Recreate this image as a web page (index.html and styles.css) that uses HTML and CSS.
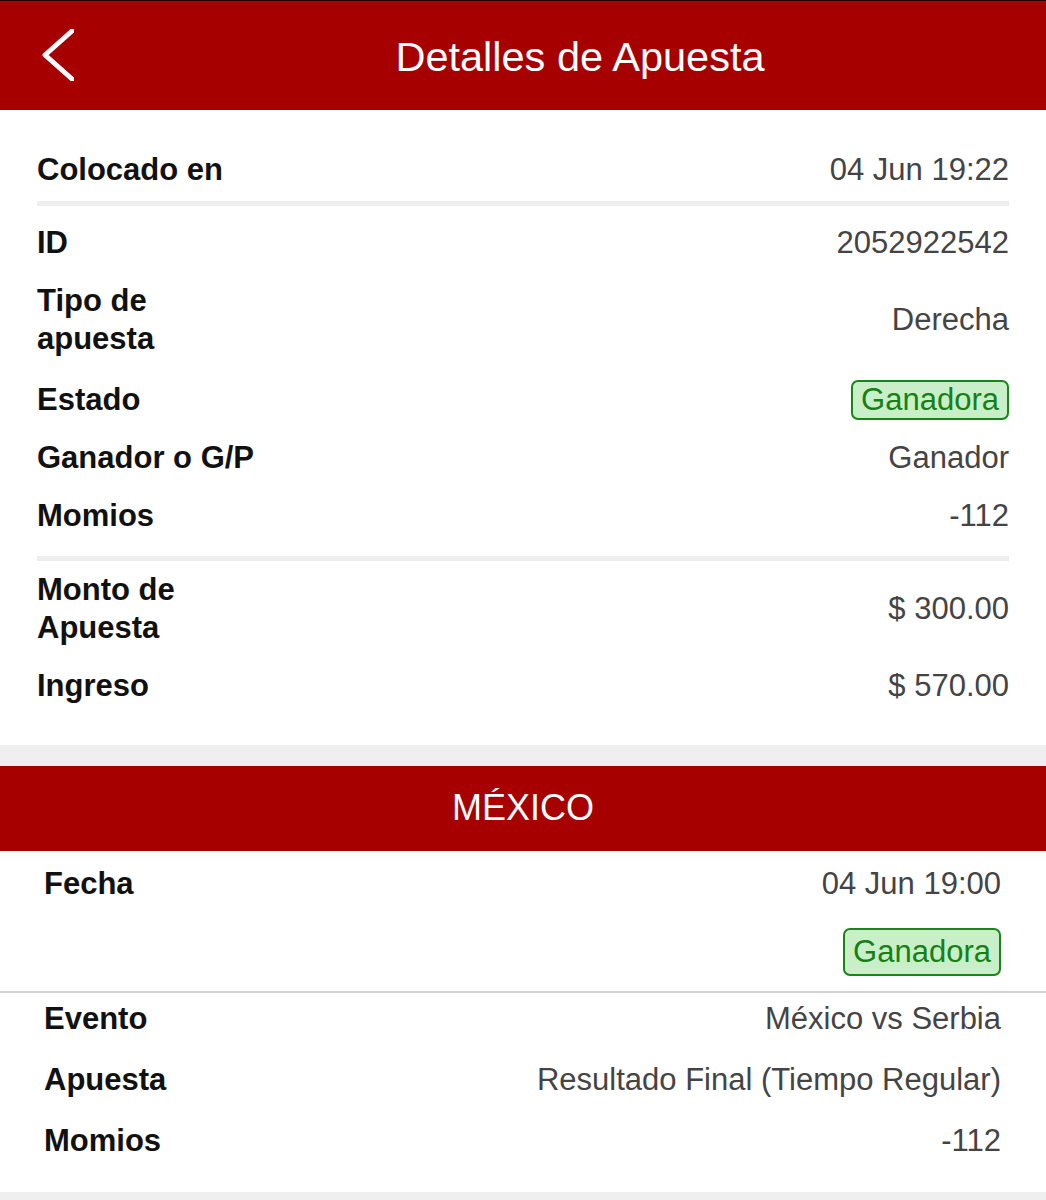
FILE: index.html
```html
<!DOCTYPE html>
<html lang="es">
<head>
    <meta charset="UTF-8">
    <title>Detalles de Apuesta</title>
    <link rel="stylesheet" href="styles.css">
</head>
<body>
    <div class="header">
        <a class="back" href="#">
            <svg width="32" height="52" viewBox="0 0 32 52">
                <polyline points="30,2 3,26 30,50" fill="none" stroke="#fff" stroke-width="5" stroke-linecap="round" stroke-linejoin="round"/>
            </svg>
        </a>
        <h1 class="title">Detalles de Apuesta</h1>
    </div>

    <!-- resumen de la apuesta -->
    <div class="summary">
        <div class="row">
            <span class="label">Colocado en</span>
            <span class="value">04 Jun 19:22</span>
        </div>
        <div class="line"></div>
        <div class="row">
            <span class="label">ID</span>
            <span class="value">2052922542</span>
        </div>
        <div class="row">
            <span class="label">Tipo de<br>apuesta</span>
            <span class="value">Derecha</span>
        </div>
        <div class="row badge-row">
            <span class="label">Estado</span>
            <span class="badge">Ganadora</span>
        </div>
        <div class="row">
            <span class="label">Ganador o G/P</span>
            <span class="value">Ganador</span>
        </div>
        <div class="row">
            <span class="label">Momios</span>
            <span class="value">-112</span>
        </div>
        <div class="line line-low"></div>
        <div class="row">
            <span class="label">Monto de<br>Apuesta</span>
            <span class="value">$ 300.00</span>
        </div>
        <div class="row">
            <span class="label">Ingreso</span>
            <span class="value">$ 570.00</span>
        </div>
    </div>

    <div class="gap"></div>

    <!-- seleccion -->
    <div class="band">MÉXICO</div>
    <div class="leg">
        <div class="leg-top">
            <div class="row fecha">
                <span class="label">Fecha</span>
                <span class="value">04 Jun 19:00</span>
            </div>
            <div class="status">
                <span class="badge badge-big">Ganadora</span>
            </div>
        </div>
        <div class="leg-info">
            <div class="row">
                <span class="label">Evento</span>
                <span class="value">México vs Serbia</span>
            </div>
            <div class="row">
                <span class="label">Apuesta</span>
                <span class="value">Resultado Final (Tiempo Regular)</span>
            </div>
            <div class="row">
                <span class="label">Momios</span>
                <span class="value">-112</span>
            </div>
        </div>
    </div>
    <div class="bottom"></div>
</body>
</html>
```

FILE: styles.css
```css
*{
    padding: 0;
    margin: 0;
    box-sizing: border-box;
}
body{
    font-family: "Liberation Sans", Arial, sans-serif;
    background-color: #efefef;
    color: #111;
}
.header{
    height: 110px;
    border-top: 1px solid #2a0000;
    background-color: #a60000;
    display: flex;
    align-items: center;
}
.header .back{
    width: 114px;
    height: 100%;
    padding-left: 42px;
    display: flex;
    align-items: center;
}
.header .back svg{
    display: block;
    margin-top: -1px;
}
.header .title{
    flex: 1;
    text-align: center;
    color: #fff;
    font-size: 41.5px;
    font-weight: normal;
    margin-top: 2px;
}

.row{
    display: flex;
    justify-content: space-between;
    align-items: center;
    padding: 10px 0;
    line-height: 38px;
    font-size: 31px;
}
.row .label{
    font-weight: bold;
    color: #111;
}
.row .value{
    color: #444;
}

.summary{
    background-color: #fff;
    padding: 31px 37px 30px;
}
.line{
    height: 5px;
    background-color: #eeeeee;
    margin: 2px 0 8px;
}
.line-low{
    margin: 11px 0 0;
}
.badge-row{
    padding: 12px 0 9px;
}
.badge{
    display: inline-block;
    height: 40px;
    line-height: 36px;
    padding: 0 8px;
    font-size: 31px;
    color: #168016;
    background-color: #c9efc9;
    border: 2px solid #1a841a;
    border-radius: 7px;
}
.badge-big{
    height: 48px;
    line-height: 44px;
}

.gap{
    height: 21px;
}
.band{
    height: 85px;
    background-color: #a60000;
    color: #fff;
    font-size: 36px;
    line-height: 83px;
    text-align: center;
}

.leg{
    background-color: #fff;
}
.leg-top{
    padding: 0 45px 0 44px;
    border-bottom: 2px solid #d2d2d2;
}
.leg .fecha{
    padding: 14px 0 0;
}
.leg .status{
    display: flex;
    justify-content: flex-end;
    padding: 25px 0 15px;
}
.leg-info{
    padding: 0 45px 16px 44px;
}
.leg-info .row{
    padding: 7px 0 16px;
}
.bottom{
    height: 8px;
}
```
